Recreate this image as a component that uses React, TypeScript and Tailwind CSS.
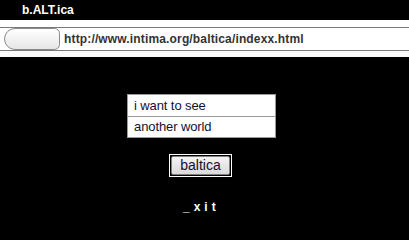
export default function App() {
  return (
    <div className="flex h-[240px] w-[409px] flex-col bg-black font-['Liberation_Sans',Arial,sans-serif]">
      <div className="flex h-[20px] items-center pl-[22px] text-[12px] font-bold text-white">b.ALT.ica</div>
      <div className="flex h-[37px] flex-col bg-white pt-[7px]">
        <div className="flex h-[24px] items-center border-y border-[#7a7a7a] bg-white">
          <div className="ml-[4px] h-[22px] w-[56px] rounded-l-[12px] rounded-r-[6px] border border-[#8a8a8a] bg-gradient-to-b from-white to-[#e6e6e6]" />
          <span className="ml-[4px] text-[12px] font-bold tracking-[0.15px] text-[#333]">http://www.intima.org/baltica/indexx.html</span>
        </div>
        <div className="flex-1 bg-[#fafafa]" />
      </div>
      <div className="flex flex-1 flex-col items-start pt-[37px]">
        <div className="ml-[127px] flex w-[149px] flex-col">
          <div className="flex h-[23px] items-center border border-[#999] bg-white pl-[6px] text-[13px] tracking-[-0.1px] text-[#111133]">i want to see</div>
          <div className="-mt-px flex h-[22px] items-center border border-[#999] bg-white pl-[6px] text-[13px] tracking-[-0.1px] text-[#111133]">another world</div>
        </div>
        <div className="mt-[16px] ml-[169px] flex h-[23px] w-[63px] border border-white p-px">
          <div className="flex flex-1 items-center justify-center rounded-[2px] border border-[#808080] bg-gradient-to-b from-[#f4f4f4] to-[#dadada] text-[14px] text-[#1a0f2e]">baltica</div>
        </div>
        <div className="mt-[21px] ml-[183px] text-[12px] font-bold tracking-[4px] text-white">_xit</div>
      </div>
    </div>
  );
}
